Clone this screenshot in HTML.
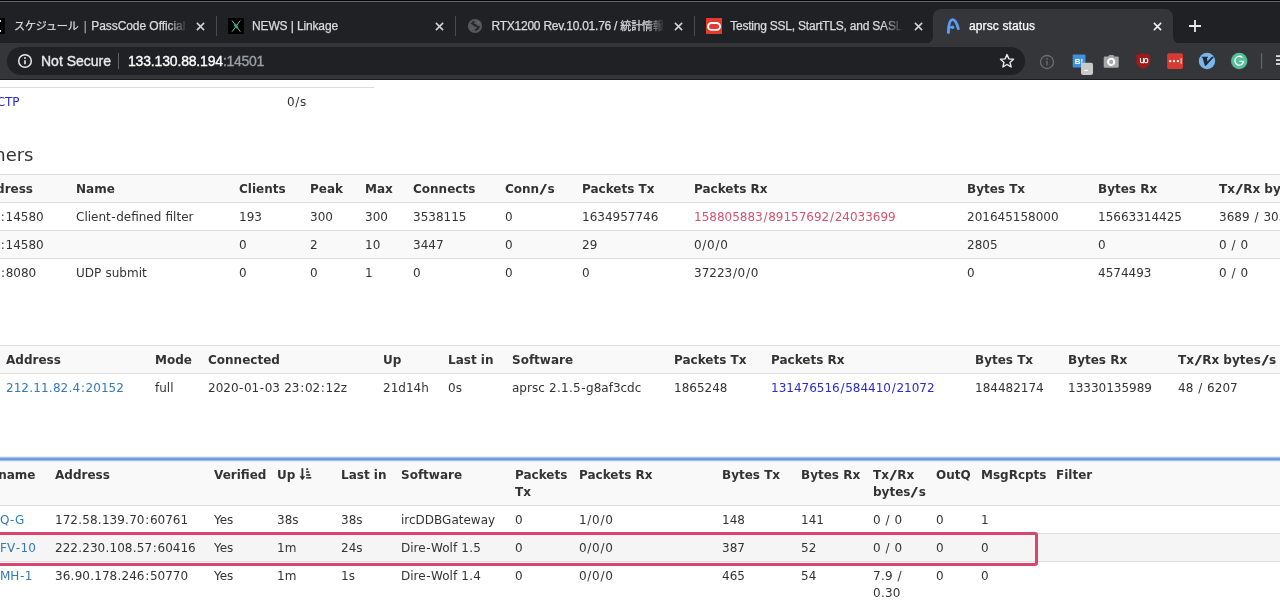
<!DOCTYPE html>
<html lang="en"><head><meta charset="utf-8"><title>aprsc status</title>
<style>

html,body{margin:0;padding:0;}
body{width:1280px;height:602px;overflow:hidden;background:#fff;position:relative;font-family:"DejaVu Sans", "Liberation Sans", sans-serif;font-size:12px;color:#333;}
#chrome{position:absolute;left:0;top:0;width:1280px;height:80px;background:#202124;font-family:"Liberation Sans", "Noto Sans CJK JP", sans-serif;overflow:hidden;}
#chrome .topline0{position:absolute;left:0;top:0;width:1280px;height:1px;background:#020202;}
#chrome .topline1{position:absolute;left:0;top:1px;width:1280px;height:1px;background:#696a6e;box-shadow:0 1px 0 #1b1c1f;}
#toolbar{position:absolute;left:0;top:43px;width:1280px;height:36px;background:#35363a;}
#toolbar-edge{position:absolute;left:0;top:79px;width:1280px;height:1px;background:#1b1c1e;}
#activetab{position:absolute;left:933px;top:9px;width:240px;height:35px;background:#35363a;border-radius:8px 8px 0 0;}
#activetab:before,#activetab:after{content:"";position:absolute;bottom:0;width:8px;height:8px;}
#activetab:before{left:-8px;background:radial-gradient(circle at 0 0,rgba(53,54,58,0) 7.5px,#35363a 8.5px);}
#activetab:after{right:-8px;background:radial-gradient(circle at 100% 0,rgba(53,54,58,0) 7.5px,#35363a 8.5px);}
.tabtxt{-webkit-text-stroke:0.25px currentColor;}
.omtxt{-webkit-text-stroke:0.35px currentColor;}
.tabtxt{position:absolute;top:17px;height:18px;line-height:18px;font-size:12px;color:#dadce0;white-space:nowrap;overflow:hidden;}
.tabtxt .cj{font-size:11px;letter-spacing:-0.1px;}
.fade{-webkit-mask-image:linear-gradient(to right,#000 calc(100% - 20px),transparent 100%);mask-image:linear-gradient(to right,#000 calc(100% - 20px),transparent 100%);}
.tabsep{position:absolute;top:16px;width:1px;height:20px;background:#4a4c50;}
.tabx{position:absolute;top:20.600px;width:11px;height:11px;}
#omni{position:absolute;left:7px;top:4px;width:1018px;height:28px;border-radius:14px;background:#202124;}
.omtxt{position:absolute;top:8px;height:20px;line-height:20px;font-size:14px;white-space:nowrap;}
.abs{position:absolute;}
#page{position:absolute;left:0;top:80px;width:1280px;height:522px;overflow:hidden;will-change:transform;}
.row{position:absolute;left:0;width:1280px;border-top:1px solid #ddd;box-sizing:border-box;}
.c{position:absolute;white-space:nowrap;line-height:17px;height:17px;}
.h{font-weight:bold;}
a{color:#337ab7;text-decoration:none;}
i{font-style:normal;}
.c{word-spacing:0.4px;}
.h{word-spacing:0;}
i.s1{margin:0 0.7px;}
i.s2{margin:0 0.55px;}
i.s3{margin:0 0.27px;}
i.s4{display:inline-block;transform:scaleX(1.7);margin:0 1.95px;}
a.b{color:#2a2ad2;}

</style></head><body>
<div id="page">
<div class="abs" style="left:0;top:7px;width:374px;height:1px;background:#ddd"></div>
<span class="c" style="right:1260.4px;top:13.5px"><a class="b">SCTP</a></span>
<span class="c" style="left:287px;top:13.5px">0<i class="s1">/</i>s</span>
<div class="abs" style="right:1246.5px;top:62px;font-size:18px;line-height:26px;white-space:nowrap">Listeners</div>
<div class="row" style="top:94px;height:28px;background:#f9f9f9"><span class="c h" style="right:1247px;top:6px;">Address</span><span class="c h" style="left:76px;top:6px;">Name</span><span class="c h" style="left:239px;top:6px;">Clients</span><span class="c h" style="left:310px;top:6px;">Peak</span><span class="c h" style="left:365px;top:6px;">Max</span><span class="c h" style="left:413px;top:6px;">Connects</span><span class="c h" style="left:505px;top:6px;">Conn<i class="s4">/</i>s</span><span class="c h" style="left:582px;top:6px;">Packets Tx</span><span class="c h" style="left:694px;top:6px;">Packets Rx</span><span class="c h" style="left:967px;top:6px;">Bytes Tx</span><span class="c h" style="left:1098px;top:6px;">Bytes Rx</span><span class="c h" style="left:1219px;top:6px;">Tx<i class="s4">/</i>Rx bytes<i class="s4">/</i>s</span></div>
<div class="row" style="top:122px;height:28px;background:#fff"><span class="c " style="right:1236.25px;top:6px;">0<i class="s3">.</i>0<i class="s3">.</i>0<i class="s3">.</i>0<i class="s1">:</i>14580</span><span class="c " style="left:76px;top:6px;">Client<i class="s2">-</i>defined filter</span><span class="c " style="left:239px;top:6px;">193</span><span class="c " style="left:310px;top:6px;">300</span><span class="c " style="left:365px;top:6px;">300</span><span class="c " style="left:413px;top:6px;">3538115</span><span class="c " style="left:505px;top:6px;">0</span><span class="c " style="left:582px;top:6px;">1634957746</span><span class="c " style="left:694px;top:6px;color:#d4526f">158805883<i class="s1">/</i>89157692<i class="s1">/</i>24033699</span><span class="c " style="left:967px;top:6px;">201645158000</span><span class="c " style="left:1098px;top:6px;">15663314425</span><span class="c " style="left:1219px;top:6px;">3689 <i class="s1">/</i> 30378</span></div>
<div class="row" style="top:150px;height:28px;background:#f9f9f9"><span class="c " style="right:1236.25px;top:6px;">0<i class="s3">.</i>0<i class="s3">.</i>0<i class="s3">.</i>0<i class="s1">:</i>14580</span><span class="c " style="left:239px;top:6px;">0</span><span class="c " style="left:310px;top:6px;">2</span><span class="c " style="left:365px;top:6px;">10</span><span class="c " style="left:413px;top:6px;">3447</span><span class="c " style="left:505px;top:6px;">0</span><span class="c " style="left:582px;top:6px;">29</span><span class="c " style="left:694px;top:6px;">0<i class="s1">/</i>0<i class="s1">/</i>0</span><span class="c " style="left:967px;top:6px;">2805</span><span class="c " style="left:1098px;top:6px;">0</span><span class="c " style="left:1219px;top:6px;">0 <i class="s1">/</i> 0</span></div>
<div class="row" style="top:178px;height:28px;background:#fff"><span class="c " style="right:1243.75px;top:6px;">0<i class="s3">.</i>0<i class="s3">.</i>0<i class="s3">.</i>0<i class="s1">:</i>8080</span><span class="c " style="left:76px;top:6px;">UDP submit</span><span class="c " style="left:239px;top:6px;">0</span><span class="c " style="left:310px;top:6px;">0</span><span class="c " style="left:365px;top:6px;">1</span><span class="c " style="left:413px;top:6px;">0</span><span class="c " style="left:505px;top:6px;">0</span><span class="c " style="left:582px;top:6px;">0</span><span class="c " style="left:694px;top:6px;">37223<i class="s1">/</i>0<i class="s1">/</i>0</span><span class="c " style="left:967px;top:6px;">0</span><span class="c " style="left:1098px;top:6px;">4574493</span><span class="c " style="left:1219px;top:6px;">0 <i class="s1">/</i> 0</span></div>
<div class="row" style="top:265px;height:28px;background:#f9f9f9"><span class="c h" style="left:6px;top:6px;">Address</span><span class="c h" style="left:155px;top:6px;">Mode</span><span class="c h" style="left:208px;top:6px;">Connected</span><span class="c h" style="left:383px;top:6px;">Up</span><span class="c h" style="left:448px;top:6px;">Last in</span><span class="c h" style="left:512px;top:6px;">Software</span><span class="c h" style="left:674px;top:6px;">Packets Tx</span><span class="c h" style="left:771px;top:6px;">Packets Rx</span><span class="c h" style="left:975px;top:6px;">Bytes Tx</span><span class="c h" style="left:1068px;top:6px;">Bytes Rx</span><span class="c h" style="left:1178px;top:6px;">Tx<i class="s4">/</i>Rx bytes<i class="s4">/</i>s</span></div>
<div class="row" style="top:293px;height:28px;background:#fff"><span class="c " style="left:6px;top:6px;"><a>212<i class="s3">.</i>11<i class="s3">.</i>82<i class="s3">.</i>4<i class="s1">:</i>20152</a></span><span class="c " style="left:155px;top:6px;">full</span><span class="c " style="left:208px;top:6px;">2020<i class="s2">-</i>01<i class="s2">-</i>03 23<i class="s1">:</i>02<i class="s1">:</i>12z</span><span class="c " style="left:383px;top:6px;">21d14h</span><span class="c " style="left:448px;top:6px;">0s</span><span class="c " style="left:512px;top:6px;">aprsc 2<i class="s3">.</i>1<i class="s3">.</i>5<i class="s2">-</i>g8af3cdc</span><span class="c " style="left:674px;top:6px;">1865248</span><span class="c " style="left:771px;top:6px;"><a class="b">131476516<i class="s1">/</i>584410<i class="s1">/</i>21072</a></span><span class="c " style="left:975px;top:6px;">184482174</span><span class="c " style="left:1068px;top:6px;">13330135989</span><span class="c " style="left:1178px;top:6px;">48 <i class="s1">/</i> 6207</span></div>
<div class="row" style="top:380px;height:45px;background:#f9f9f9"><span class="c h" style="right:1244.5px;top:6px;">Username</span><span class="c h" style="left:55px;top:6px;">Address</span><span class="c h" style="left:214px;top:6px;">Verified</span><span class="c h" style="left:277px;top:6px;">Up</span><span class="c h" style="left:341px;top:6px;">Last in</span><span class="c h" style="left:401px;top:6px;">Software</span><span class="c h" style="left:515px;top:6px;">Packets</span><span class="c h" style="left:515px;top:23px;">Tx</span><span class="c h" style="left:579px;top:6px;">Packets Rx</span><span class="c h" style="left:722px;top:6px;">Bytes Tx</span><span class="c h" style="left:801px;top:6px;">Bytes Rx</span><span class="c h" style="left:873px;top:6px;">Tx<i class="s4">/</i>Rx</span><span class="c h" style="left:873px;top:23px;">bytes<i class="s4">/</i>s</span><span class="c h" style="left:936px;top:6px;">OutQ</span><span class="c h" style="left:981px;top:6px;">MsgRcpts</span><span class="c h" style="left:1056px;top:6px;">Filter</span></div>
<div class="abs" style="left:0;top:375.5px;width:1280px;height:6px;background:linear-gradient(to bottom,#fff 0,#c3d6f5 1.2px,#7aa0e0 2px,#7099d8 3.6px,#a9c3ef 4.6px,#e4ecf9 5.5px,#f9f9f9 6px)"></div>
<svg class="abs" style="left:298px;top:387px" width="15" height="15" viewBox="298 467 15 15"><rect x="301.5" y="468.2" width="1.8" height="9" fill="#333"/><path d="M299.5 476.3h5.800l-2.900 4z" fill="#333"/><rect x="306.200" y="468.300" width="2" height="1.700" fill="#333"/><rect x="306.200" y="471.200" width="3.100" height="1.700" fill="#333"/><rect x="306.200" y="474.100" width="4.100" height="1.700" fill="#333"/><rect x="306.200" y="477" width="5.100" height="1.600" fill="#333"/></svg>
<div class="row" style="top:425px;height:28px;background:#fff"><span class="c " style="left:0px;top:6px;"><a>Q<i class="s2">-</i>G</a></span><span class="c " style="left:55px;top:6px;">172<i class="s3">.</i>58<i class="s3">.</i>139<i class="s3">.</i>70<i class="s1">:</i>60761</span><span class="c " style="left:214px;top:6px;">Yes</span><span class="c " style="left:277px;top:6px;">38s</span><span class="c " style="left:341px;top:6px;">38s</span><span class="c " style="left:401px;top:6px;">ircDDBGateway</span><span class="c " style="left:515px;top:6px;">0</span><span class="c " style="left:579px;top:6px;">1<i class="s1">/</i>0<i class="s1">/</i>0</span><span class="c " style="left:722px;top:6px;">148</span><span class="c " style="left:801px;top:6px;">141</span><span class="c " style="left:873px;top:6px;">0 <i class="s1">/</i> 0</span><span class="c " style="left:936px;top:6px;">0</span><span class="c " style="left:981px;top:6px;">1</span></div>
<div class="row" style="top:453px;height:28px;background:#f5f5f5"><span class="c " style="left:0px;top:6px;"><a>FV<i class="s2">-</i>10</a></span><span class="c " style="left:55px;top:6px;">222<i class="s3">.</i>230<i class="s3">.</i>108<i class="s3">.</i>57<i class="s1">:</i>60416</span><span class="c " style="left:214px;top:6px;">Yes</span><span class="c " style="left:277px;top:6px;">1m</span><span class="c " style="left:341px;top:6px;">24s</span><span class="c " style="left:401px;top:6px;">Dire<i class="s2">-</i>Wolf 1<i class="s3">.</i>5</span><span class="c " style="left:515px;top:6px;">0</span><span class="c " style="left:579px;top:6px;">0<i class="s1">/</i>0<i class="s1">/</i>0</span><span class="c " style="left:722px;top:6px;">387</span><span class="c " style="left:801px;top:6px;">52</span><span class="c " style="left:873px;top:6px;">0 <i class="s1">/</i> 0</span><span class="c " style="left:936px;top:6px;">0</span><span class="c " style="left:981px;top:6px;">0</span></div>
<div class="row" style="top:481px;height:45px;background:#fff"><span class="c " style="left:0px;top:6px;"><a>MH<i class="s2">-</i>1</a></span><span class="c " style="left:55px;top:6px;">36<i class="s3">.</i>90<i class="s3">.</i>178<i class="s3">.</i>246<i class="s1">:</i>50770</span><span class="c " style="left:214px;top:6px;">Yes</span><span class="c " style="left:277px;top:6px;">1m</span><span class="c " style="left:341px;top:6px;">1s</span><span class="c " style="left:401px;top:6px;">Dire<i class="s2">-</i>Wolf 1<i class="s3">.</i>4</span><span class="c " style="left:515px;top:6px;">0</span><span class="c " style="left:579px;top:6px;">0<i class="s1">/</i>0<i class="s1">/</i>0</span><span class="c " style="left:722px;top:6px;">465</span><span class="c " style="left:801px;top:6px;">54</span><span class="c " style="left:873px;top:6px;">7<i class="s3">.</i>9 <i class="s1">/</i></span><span class="c " style="left:873px;top:23px;">0<i class="s3">.</i>30</span><span class="c " style="left:936px;top:6px;">0</span><span class="c " style="left:981px;top:6px;">0</span></div>
<div class="abs" style="left:-10px;top:452px;width:1048px;height:34px;box-sizing:border-box;border:3px solid #d9456f;border-radius:3px"></div>
</div>
<div id="chrome">
<div class="topline0"></div><div class="topline1"></div>
<div id="toolbar">
<div id="omni"></div>
</div>
<div id="toolbar-edge"></div>
<div id="activetab"></div>
<div style="position:absolute;left:0;top:0;width:1280px;height:80px;will-change:transform">
<!-- tab 1 -->
<div class="abs" style="left:-11px;top:18px;width:15.800px;height:16px;background:#000"></div><div class="abs" style="left:-1px;top:20.300px;width:2.200px;height:1.300px;background:#ddd"></div><div class="abs" style="left:-1px;top:30.200px;width:2.200px;height:1.500px;background:#ddd"></div>
<span class="tabtxt fade" style="left:14px;width:174px;letter-spacing:-0.06px"><span class="cj">スケジュール</span><span style="color:#9aa0a6;margin:0 4.5px 0 5px">|</span>PassCode Official</span>
<svg class="tabx" style="left:195.300px" viewBox="0 0 11 11"><path d="M1.900 1.900l7.200 7.200M9.100 1.900l-7.200 7.200" stroke="#d3d5d9" stroke-width="1.500" fill="none"/></svg>
<div class="tabsep" style="left:216px"></div>
<!-- tab 2 -->
<div class="abs" style="left:228px;top:18px;width:16px;height:16px;background:#000"></div>
<svg class="abs" style="left:228px;top:18px" width="16" height="16" viewBox="228 18 16 16"><path d="M232 20.500l8.300 11.200M240.300 20.500l-8.300 11.200" stroke="#86c4ae" stroke-width="0.950" fill="none"/><ellipse cx="236.100" cy="26.100" rx="1.500" ry="3" transform="rotate(-36 236.100 26.100)" fill="#3f9f7f"/></svg>
<span class="tabtxt" style="left:252px;width:170px;letter-spacing:-0.13px">NEWS | Linkage</span>
<svg class="tabx" style="left:434.300px" viewBox="0 0 11 11"><path d="M1.900 1.900l7.200 7.200M9.100 1.900l-7.200 7.200" stroke="#d3d5d9" stroke-width="1.500" fill="none"/></svg>
<div class="tabsep" style="left:455px"></div>
<!-- tab 3 -->
<svg class="abs" style="left:466px;top:17px" width="18" height="18" viewBox="466 17 18 18"><circle cx="475" cy="26" r="7.100" fill="#56595e"/><path d="M470.500 23.800l2.200-2.600 1.600-.3.600 1.400-1.300 1.300 2.400.600 1.500 1.600 2.500.400-.900 2.500-2.300 1.900-2.500.300.700-1.600 1.900-1.300-.300-1.300-2.500-.300-1.500-1.600z" fill="#26282c"/><path d="M477.500 21.500l1.800.300.600 1.600-1.500.800-1.200-.900z" fill="#63666b"/></svg>
<span class="tabtxt fade" style="left:491.500px;width:173px;letter-spacing:-0.24px">RTX1200 Rev.10.01.76 / <span class="cj">統計情報</span></span>
<svg class="tabx" style="left:673.400px" viewBox="0 0 11 11"><path d="M1.900 1.900l7.200 7.200M9.100 1.900l-7.200 7.200" stroke="#d3d5d9" stroke-width="1.500" fill="none"/></svg>
<div class="tabsep" style="left:694px"></div>
<!-- tab 4 -->
<div class="abs" style="left:705.900px;top:17.800px;width:16.300px;height:16.400px;background:#e33a2d"></div>
<svg class="abs" style="left:705px;top:17px" width="18" height="18" viewBox="705 17 18 18"><rect x="708.050" y="22.950" width="12" height="6.900" rx="3.450" fill="none" stroke="#fff" stroke-width="1.900"/></svg>
<span class="tabtxt fade" style="left:730.200px;width:173px;letter-spacing:-0.22px">Testing SSL, StartTLS, and SASL</span>
<svg class="tabx" style="left:912.800px" viewBox="0 0 11 11"><path d="M1.900 1.900l7.200 7.200M9.100 1.900l-7.200 7.200" stroke="#d3d5d9" stroke-width="1.500" fill="none"/></svg>
<!-- tab 5 active -->
<svg class="abs" style="left:944px;top:16px" width="18" height="20" viewBox="944 16 18 20"><path d="M948.400 32.500C948.500 26.500 949.600 20 952.400 19.600 955.100 19.300 957.100 24.200 958.300 28.700" stroke="#5c9df5" stroke-width="2.900" stroke-linecap="round" fill="none"/><circle cx="952.600" cy="27.300" r="1.700" fill="#5c9df5"/><rect x="949" y="26.200" width="3.500" height="2.200" fill="#5c9df5"/></svg>
<span class="tabtxt" style="left:969px;width:150px;color:#fff;letter-spacing:0.13px">aprsc status</span>
<svg class="tabx" style="left:1151.500px" viewBox="0 0 11 11"><path d="M1.900 1.900l7.200 7.200M9.100 1.900l-7.200 7.200" stroke="#f1f3f4" stroke-width="1.500" fill="none"/></svg>
<svg class="abs" style="left:1188.200px;top:18.800px" width="14" height="14" viewBox="0 0 14 14"><path d="M7 1v12M1 7h12" stroke="#e8eaed" stroke-width="1.8" fill="none"/></svg>
<!-- omnibox contents -->
<svg class="abs" style="left:17px;top:53px" width="16" height="16" viewBox="0 0 16 16"><circle cx="8" cy="8" r="6.3" fill="none" stroke="#e8eaed" stroke-width="1.5"/><path d="M8 7.2v4" stroke="#e8eaed" stroke-width="1.6"/><circle cx="8" cy="5" r="0.95" fill="#e8eaed"/></svg>
<span class="omtxt" style="left:41px;top:51px;color:#e8eaed">Not Secure</span>
<div class="abs" style="left:118px;top:53px;width:1px;height:16px;background:#5f6368"></div>
<span class="omtxt" style="left:128px;top:51px;color:#fff;letter-spacing:-0.17px">133.130.88.194<span style="color:#9aa0a6;letter-spacing:-0.3px">:14501</span></span>
<svg class="abs" style="left:999px;top:53px" width="16" height="16" viewBox="0 0 16 16"><path d="M8 1.6l1.9 4.3 4.6.4-3.5 3.1 1.1 4.6L8 11.5 3.9 14l1.1-4.6L1.5 6.3l4.6-.4z" fill="none" stroke="#e8eaed" stroke-width="1.4" stroke-linejoin="round"/></svg>
<!-- extension icons -->
<svg class="abs" style="left:1030px;top:44px" width="250" height="36" viewBox="1030 44 250 36">
<circle cx="1047" cy="62" r="6.500" fill="none" stroke="#6b6d71" stroke-width="1.300"/><path d="M1047 60.800v4.400" stroke="#6b6d71" stroke-width="1.400"/><circle cx="1047" cy="58.700" r="0.900" fill="#6b6d71"/>
<rect x="1072.700" y="54.500" width="12.800" height="12.900" rx="1" fill="#3f91da"/>
<text x="1079" y="64" font-size="8" font-weight="bold" fill="#fff" text-anchor="middle" font-family="Liberation Sans, sans-serif">B!</text>
<rect x="1081" y="62.800" width="12" height="12.100" rx="2" fill="#c9c9c9"/><rect x="1084.300" y="69.900" width="3.700" height="1.100" fill="#fff"/>
<path d="M1104.700 56.600h3.600l.9-1.600h4.200l.9 1.600h3.400a1 1 0 0 1 1 1v9.200a1 1 0 0 1-1 1h-13a1 1 0 0 1-1-1v-9.200a1 1 0 0 1 1-1z" fill="#a6a7a9"/><circle cx="1111.200" cy="61.900" r="3.100" fill="none" stroke="#fff" stroke-width="2.100"/>
<path d="M1136.200 54.700c2.500-.1 5-.5 7-1.400 2 .9 4.500 1.300 7 1.400v7.500c0 3-3.500 5.300-7 6.900-3.500-1.600-7-3.900-7-6.900z" fill="#9a1c1c"/>
<text x="1143.600" y="63.300" font-size="9" fill="#fff" stroke="#fff" stroke-width="0.250" text-anchor="middle" letter-spacing="-0.9" font-family="Liberation Sans, sans-serif">uo</text>
<rect x="1167.100" y="53.300" width="15.900" height="15.800" rx="1.800" fill="#d63a32"/>
<circle cx="1170.200" cy="61.200" r="1.150" fill="#fff"/><circle cx="1174" cy="61.200" r="1.150" fill="#fff"/><circle cx="1177.900" cy="61.200" r="1.150" fill="#fff"/><rect x="1180.500" y="58.100" width="1.300" height="6" fill="#f3b8b2"/>
<circle cx="1207" cy="61" r="8.200" fill="#7ab7eb"/>
<path d="M1201.800 56.700h6.200v1h-1l.4 3.900 4.500-4.900h2.300l-8.300 9h-1.100l-2.200-8h-.8z" fill="#1f2a38"/>
<circle cx="1239.200" cy="61" r="8.200" fill="#55c09a"/>
<path d="M1242.300 57.500a4.400 4.400 0 1 0 1.300 3.900h-4.200" fill="none" stroke="#fff" stroke-width="1.300"/>
<rect x="1261" y="53.200" width="1.100" height="15.600" fill="#686a6e"/>
<rect x="1276" y="55.300" width="6" height="1.600" fill="#f1f3f4"/><rect x="1276" y="59.300" width="6" height="1.600" fill="#f1f3f4"/><rect x="1276" y="63.200" width="6" height="1.600" fill="#f1f3f4"/>
</svg>

</div>
</div>
</body></html>
